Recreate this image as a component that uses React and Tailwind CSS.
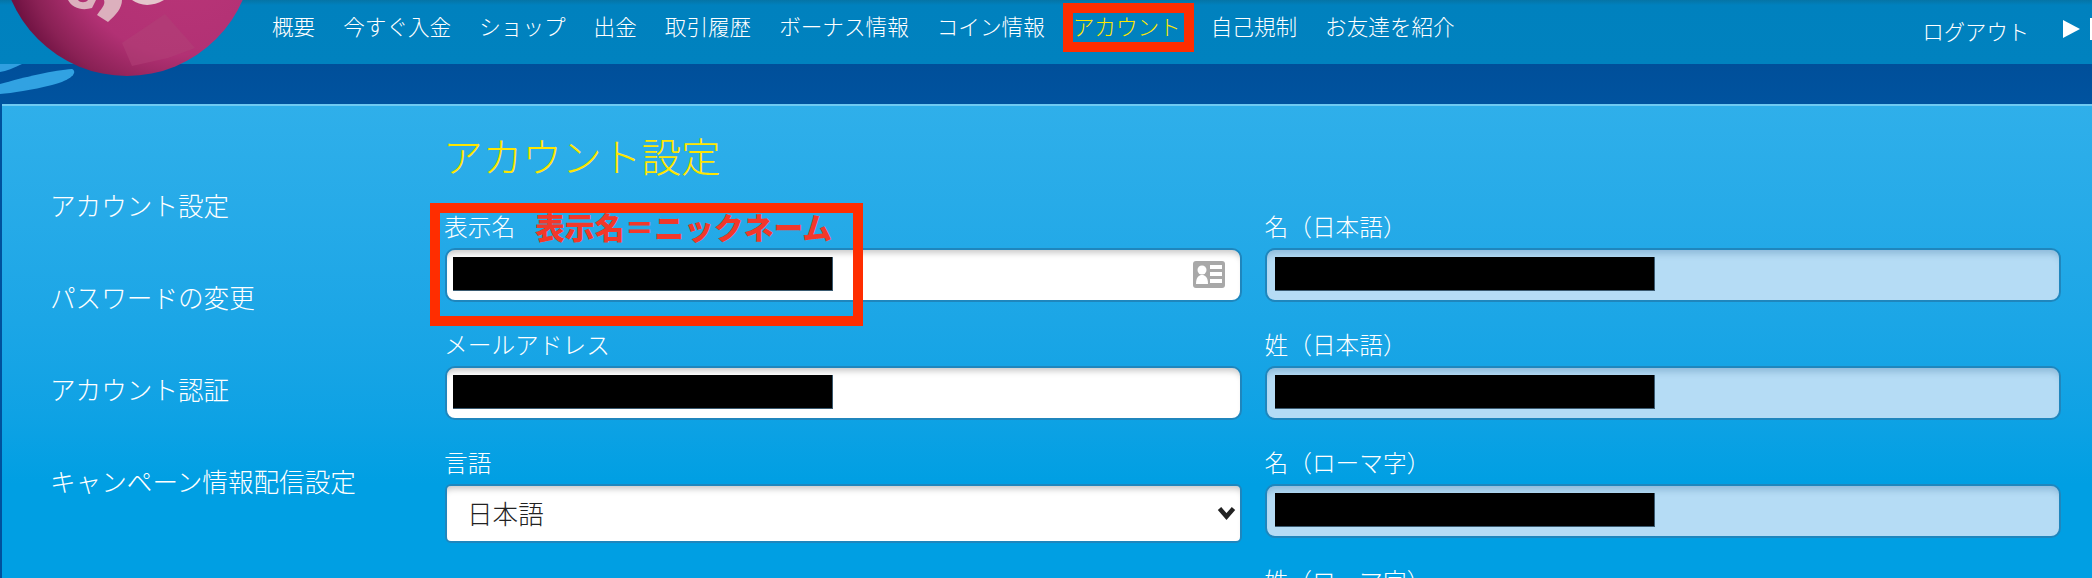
import React from "react";

const NAV = ["概要", "今すぐ入金", "ショップ", "出金", "取引履歴", "ボーナス情報", "コイン情報", "アカウント", "自己規制", "お友達を紹介"];
const SIDE = ["アカウント設定", "パスワードの変更", "アカウント認証", "キャンペーン情報配信設定"];
const RIGHT = ["名（日本語）", "姓（日本語）", "名（ローマ字）", "姓（ローマ字）"];

const jp = "font-['Noto_Sans_CJK_JP','Noto_Sans',sans-serif]";
const fieldBase = "h-[54px] rounded-[10px] border-2 border-[#1f86bd] flex items-center pb-[2px]";

function Ball() {
  return (
    <svg className="absolute left-0 top-0 z-10" width="260" height="110" viewBox="0 0 260 110">
      <defs>
        <radialGradient id="ballFill" cx="0.72" cy="0.45" r="0.75">
          <stop offset="0" stopColor="#bb3679" />
          <stop offset="0.62" stopColor="#b23174" />
          <stop offset="0.84" stopColor="#8a2155" />
          <stop offset="1" stopColor="#650c3a" />
        </radialGradient>
      </defs>
      <path d="M0 84 C25 77 55 70 72 69 C78 72 72 80 52 85 C32 90 12 93 0 94 Z" fill="#31a2e2" />
      <path d="M0 64 L22 64 C14 68 6 71 0 72 Z" fill="#2f9fe0" />
      <circle cx="127" cy="-50" r="126" fill="url(#ballFill)" />
      <path d="M122 43 L165 14 L195 48 L168 58 L132 66 Z" fill="#b04077" opacity="0.6" />
      <path d="M68 0 C72 8 82 11 92 8 L96 0 L88 0 C86 3 80 3 78 0 Z" fill="#dcb0bd" />
      <path d="M104 0 C106 5 100 10 97 15 L108 22 C116 15 122 8 122 0 Z" fill="#dcb0bd" />
      <path d="M132 0 C140 6 152 7 164 0 Z" fill="#e4c6cc" />
    </svg>
  );
}

function CardIcon() {
  return (
    <svg className="absolute right-[15px] top-[11px]" width="32" height="27" viewBox="0 0 32 27">
      <rect width="32" height="27" rx="3" fill="#a8a8a8" />
      <circle cx="9" cy="9" r="4.5" fill="#fff" />
      <path d="M3 23 C3 16 6 14 9 14 C12 14 15 16 15 23 Z" fill="#fff" />
      <rect x="17" y="4" width="12" height="4" fill="#fff" />
      <rect x="17" y="11" width="12" height="4" fill="#fff" />
      <rect x="17" y="18" width="12" height="4" fill="#fff" />
    </svg>
  );
}

function Label({ children }) {
  return <div className="h-[30px] mb-[7px] flex items-center text-[23.7px] leading-[30px] font-light text-white whitespace-nowrap">{children}</div>;
}

function Redacted() {
  return <div className="w-[380px] h-[34px] bg-black border-b border-r border-[#3a5a70]" />;
}

function App() {
  return (
    <div className={`relative w-[2092px] h-[578px] overflow-hidden bg-[#00519d] ${jp}`}>
      <Ball />
      <header className="h-16 flex items-start bg-gradient-to-b from-[#0574a6] from-[0%] via-[#0081be] via-[8%] to-[#0082bf] text-white font-light">
        <nav className="pl-[272px] pt-[11px] flex gap-[28px] text-[21.6px] leading-[30px] whitespace-nowrap">
          {NAV.map((item) => (
            <a key={item} className={item === "アカウント" ? "relative mr-[2px] text-[#ffe600]" : ""}>
              {item}
              {item === "アカウント" && <span className="absolute -left-[10px] -right-[13px] -top-[8px] -bottom-[11px] border-[10px] border-[#ff2d00]" />}
            </a>
          ))}
        </nav>
        <div className="ml-auto pt-[16px] flex items-start text-[21.3px] leading-[30px] whitespace-nowrap">
          <span>ログアウト</span>
          <svg className="ml-[34px] mt-[4px]" width="17" height="18" viewBox="0 0 17 18">
            <path d="M0 0 L17 9 L0 18 Z" fill="#fff" />
          </svg>
          <span className="ml-[10px] mt-[2px] w-[2px] h-[22px] bg-white" />
        </div>
      </header>

      <div className="h-10 bg-gradient-to-b from-[#004f9a] to-[#00539f]" />

      <main className="ml-[2px] h-[474px] border-t-2 border-[#6fcaf2] bg-gradient-to-b from-[#2fafea] to-[#009fe3] to-[80%] flex text-white">
        <aside className="w-[443px] pl-[48px] pt-[83px] flex flex-col gap-[60px] text-[25.6px] leading-[32px] font-light whitespace-nowrap">
          {SIDE.map((item) => (
            <a key={item}>{item}</a>
          ))}
        </aside>

        <section className="flex-1 pr-[31px] pt-[25px]">
          <h1 className="-ml-[2px] text-[39.7px] leading-[48px] font-light text-[#ffe600] mb-[32px]">アカウント設定</h1>
          <div className="grid grid-cols-2 gap-x-[23px]">
            <div className="flex flex-col">
              <div className="relative mb-[27px]">
                <Label>
                  <span className="-ml-[1px]">表示名</span>
                  <span className="ml-[20px] text-[29.8px] font-black text-[#f2382a]">表示名＝ニックネーム</span>
                </Label>
                <div className={`${fieldBase} relative bg-white pl-[6px] shadow-[inset_0_7px_6px_-4px_rgba(0,0,0,0.22)]`}>
                  <Redacted />
                  <CardIcon />
                </div>
                <span className="absolute -left-[15px] -top-[8px] w-[433px] h-[123px] border-[10px] border-[#ff2d00]" />
              </div>

              <div className="mb-[27px]">
                <Label><span className="-ml-[1px]">メールアドレス</span></Label>
                <div className={`${fieldBase} bg-white pl-[6px] shadow-[inset_0_7px_6px_-4px_rgba(0,0,0,0.22)]`}>
                  <Redacted />
                </div>
              </div>

              <div>
                <Label><span className="-ml-[1px]">言語</span></Label>
                <div className="relative">
                  <select className="appearance-none w-full h-[59px] rounded-[6px] border-2 border-[#1f86bd] bg-white pl-[20px] text-[25.6px] font-light text-[#222] shadow-[inset_0_7px_6px_-4px_rgba(0,0,0,0.22)]">
                    <option>日本語</option>
                  </select>
                  <svg className="absolute right-[6px] top-[21px]" width="19" height="16" viewBox="0 0 19 16">
                    <path d="M2.5 3.5 L9.5 11.5 L16.5 3.5" fill="none" stroke="#222" strokeWidth="4.5" />
                  </svg>
                </div>
              </div>
            </div>

            <div className="flex flex-col">
              {RIGHT.map((label, i) => (
                <div key={label} className="mb-[27px]">
                  <Label>{label}</Label>
                  {i < 3 && (
                    <div className={`${fieldBase} bg-[#b5dcf5] pl-[8px] shadow-[inset_0_8px_6px_-4px_rgba(30,90,140,0.25)]`}>
                      <Redacted />
                    </div>
                  )}
                </div>
              ))}
            </div>
          </div>
        </section>
      </main>
    </div>
  );
}

export default App;
